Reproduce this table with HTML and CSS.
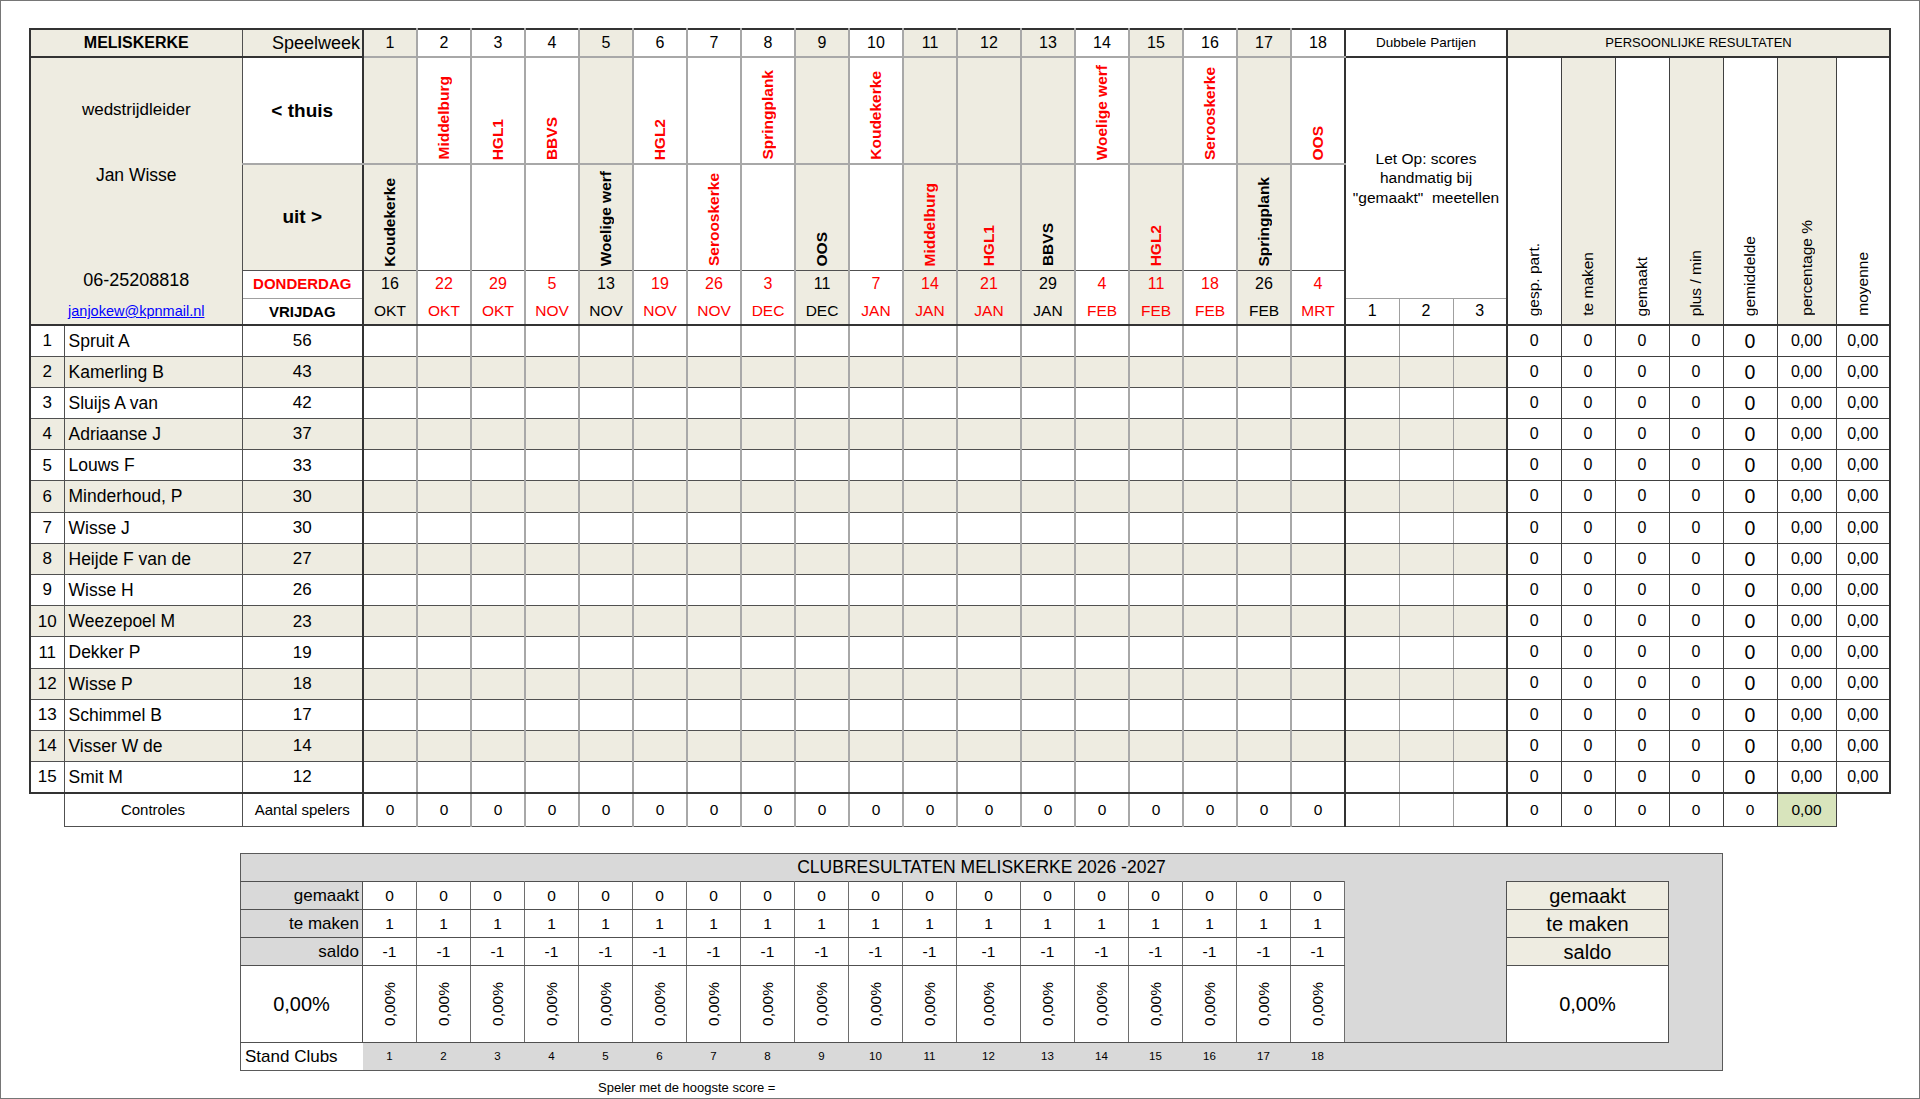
FILE: index.html
```html
<!DOCTYPE html>
<html lang="nl">
<head>
<meta charset="utf-8">
<title>Meliskerke</title>
<link rel="stylesheet" href="styles.css">
</head>
<body>
<table class="main">
<colgroup>
<col class="c-num"><col class="c-name"><col class="c-score">
<col class="c-wk"><col class="c-wk"><col class="c-wk"><col class="c-wk"><col class="c-wk"><col class="c-wk"><col class="c-wk"><col class="c-wk"><col class="c-wk"><col class="c-wk"><col class="c-wk"><col class="c-wk12"><col class="c-wk"><col class="c-wk"><col class="c-wk"><col class="c-wk"><col class="c-wk"><col class="c-wk">
<col class="c-wk"><col class="c-wk"><col class="c-wk">
<col class="c-wk"><col class="c-wk"><col class="c-wk"><col class="c-wk"><col class="c-wk"><col class="c-pct"><col class="c-wk">
</colgroup>
<tr class="rh">
<td colspan="2" class="b fl cname">MELISKERKE</td>
<td class="b e speel">Speelweek</td>
<td class="w b">1</td><td class="w">2</td><td class="w">3</td><td class="w">4</td><td class="w b">5</td><td class="w">6</td><td class="w">7</td><td class="w">8</td><td class="w b">9</td><td class="w">10</td><td class="w b">11</td><td class="w b">12</td><td class="w b">13</td><td class="w">14</td><td class="w b">15</td><td class="w">16</td><td class="w b">17</td><td class="w e">18</td>
<td colspan="3" class="e dub">Dubbele Partijen</td>
<td colspan="7" class="b pl pers">PERSOONLIJKE RESULTATEN</td>
</tr>
<tr class="rt">
<td colspan="2" rowspan="4" class="b fl info">
<div class="lead">wedstrijdleider</div>
<div class="lname">Jan Wisse</div>
<div class="tel">06-25208818</div>
<a class="mail" href="#">janjokew@kpnmail.nl</a>
</td>
<td class="e thuis">&lt; thuis</td>
<td class="w b"></td>
<td class="w rot"><span class="vt tm red">Middelburg</span></td>
<td class="w rot"><span class="vt tm red">HGL1</span></td>
<td class="w rot"><span class="vt tm red">BBVS</span></td>
<td class="w b"></td>
<td class="w rot"><span class="vt tm red">HGL2</span></td>
<td class="w"></td>
<td class="w rot"><span class="vt tm red">Springplank</span></td>
<td class="w b"></td>
<td class="w rot"><span class="vt tm red">Koudekerke</span></td>
<td class="w b"></td><td class="w b"></td><td class="w b"></td>
<td class="w rot"><span class="vt tm red">Woelige werf</span></td>
<td class="w b"></td>
<td class="w rot"><span class="vt tm red">Serooskerke</span></td>
<td class="w b"></td>
<td class="w e rot"><span class="vt tm red">OOS</span></td>
<td colspan="3" rowspan="3" class="e letop">Let Op: scores<br>handmatig bij<br>"gemaakt"&nbsp; meetellen</td>
<td rowspan="4" class="p ph"><span class="vt">gesp. part.</span></td>
<td rowspan="4" class="p ph b"><span class="vt">te maken</span></td>
<td rowspan="4" class="p ph"><span class="vt">gemaakt</span></td>
<td rowspan="4" class="p ph b"><span class="vt">plus / min</span></td>
<td rowspan="4" class="p ph"><span class="vt">gemiddelde</span></td>
<td rowspan="4" class="p ph b"><span class="vt">percentage %</span></td>
<td rowspan="4" class="p pl ph"><span class="vt">moyenne</span></td>
</tr>
<tr class="ru">
<td class="b e uit">uit &gt;</td>
<td class="w b rot"><span class="vt tm">Koudekerke</span></td>
<td class="w"></td><td class="w"></td><td class="w"></td>
<td class="w b rot"><span class="vt tm">Woelige werf</span></td>
<td class="w"></td>
<td class="w rot"><span class="vt tm red">Serooskerke</span></td>
<td class="w"></td>
<td class="w b rot"><span class="vt tm">OOS</span></td>
<td class="w"></td>
<td class="w b rot"><span class="vt tm red">Middelburg</span></td>
<td class="w b rot"><span class="vt tm red">HGL1</span></td>
<td class="w b rot"><span class="vt tm">BBVS</span></td>
<td class="w"></td>
<td class="w b rot"><span class="vt tm red">HGL2</span></td>
<td class="w"></td>
<td class="w b rot"><span class="vt tm">Springplank</span></td>
<td class="w e"></td>
</tr>
<tr class="rd">
<td class="e don">DONDERDAG</td>
<td class="w b">16</td><td class="w red">22</td><td class="w red">29</td><td class="w red">5</td><td class="w b">13</td><td class="w red">19</td><td class="w red">26</td><td class="w red">3</td><td class="w b">11</td><td class="w red">7</td><td class="w b red">14</td><td class="w b red">21</td><td class="w b">29</td><td class="w red">4</td><td class="w b red">11</td><td class="w red">18</td><td class="w b">26</td><td class="w e red">4</td>
</tr>
<tr class="rv">
<td class="e vrij">VRIJDAG</td>
<td class="w b">OKT</td><td class="w red">OKT</td><td class="w red">OKT</td><td class="w red">NOV</td><td class="w b">NOV</td><td class="w red">NOV</td><td class="w red">NOV</td><td class="w red">DEC</td><td class="w b">DEC</td><td class="w red">JAN</td><td class="w b red">JAN</td><td class="w b red">JAN</td><td class="w b">JAN</td><td class="w red">FEB</td><td class="w b red">FEB</td><td class="w red">FEB</td><td class="w b">FEB</td><td class="w e red">MRT</td>
<td class="d">1</td><td class="d">2</td><td class="d e">3</td>
</tr>

<tr class="rp"><td class="fl num">1</td><td class="nm">Spruit A</td><td class="e sc">56</td><td class="w"></td><td class="w"></td><td class="w"></td><td class="w"></td><td class="w"></td><td class="w"></td><td class="w"></td><td class="w"></td><td class="w"></td><td class="w"></td><td class="w"></td><td class="w"></td><td class="w"></td><td class="w"></td><td class="w"></td><td class="w"></td><td class="w"></td><td class="w e"></td><td class="d"></td><td class="d"></td><td class="d e"></td><td class="p">0</td><td class="p">0</td><td class="p">0</td><td class="p">0</td><td class="p g">0</td><td class="p">0,00</td><td class="p pl">0,00</td></tr>
<tr class="rp alt"><td class="fl num">2</td><td class="nm">Kamerling B</td><td class="e sc">43</td><td class="w"></td><td class="w"></td><td class="w"></td><td class="w"></td><td class="w"></td><td class="w"></td><td class="w"></td><td class="w"></td><td class="w"></td><td class="w"></td><td class="w"></td><td class="w"></td><td class="w"></td><td class="w"></td><td class="w"></td><td class="w"></td><td class="w"></td><td class="w e"></td><td class="d"></td><td class="d"></td><td class="d e"></td><td class="p">0</td><td class="p">0</td><td class="p">0</td><td class="p">0</td><td class="p g">0</td><td class="p">0,00</td><td class="p pl">0,00</td></tr>
<tr class="rp"><td class="fl num">3</td><td class="nm">Sluijs A van</td><td class="e sc">42</td><td class="w"></td><td class="w"></td><td class="w"></td><td class="w"></td><td class="w"></td><td class="w"></td><td class="w"></td><td class="w"></td><td class="w"></td><td class="w"></td><td class="w"></td><td class="w"></td><td class="w"></td><td class="w"></td><td class="w"></td><td class="w"></td><td class="w"></td><td class="w e"></td><td class="d"></td><td class="d"></td><td class="d e"></td><td class="p">0</td><td class="p">0</td><td class="p">0</td><td class="p">0</td><td class="p g">0</td><td class="p">0,00</td><td class="p pl">0,00</td></tr>
<tr class="rp alt"><td class="fl num">4</td><td class="nm">Adriaanse J</td><td class="e sc">37</td><td class="w"></td><td class="w"></td><td class="w"></td><td class="w"></td><td class="w"></td><td class="w"></td><td class="w"></td><td class="w"></td><td class="w"></td><td class="w"></td><td class="w"></td><td class="w"></td><td class="w"></td><td class="w"></td><td class="w"></td><td class="w"></td><td class="w"></td><td class="w e"></td><td class="d"></td><td class="d"></td><td class="d e"></td><td class="p">0</td><td class="p">0</td><td class="p">0</td><td class="p">0</td><td class="p g">0</td><td class="p">0,00</td><td class="p pl">0,00</td></tr>
<tr class="rp"><td class="fl num">5</td><td class="nm">Louws F</td><td class="e sc">33</td><td class="w"></td><td class="w"></td><td class="w"></td><td class="w"></td><td class="w"></td><td class="w"></td><td class="w"></td><td class="w"></td><td class="w"></td><td class="w"></td><td class="w"></td><td class="w"></td><td class="w"></td><td class="w"></td><td class="w"></td><td class="w"></td><td class="w"></td><td class="w e"></td><td class="d"></td><td class="d"></td><td class="d e"></td><td class="p">0</td><td class="p">0</td><td class="p">0</td><td class="p">0</td><td class="p g">0</td><td class="p">0,00</td><td class="p pl">0,00</td></tr>
<tr class="rp alt"><td class="fl num">6</td><td class="nm">Minderhoud, P</td><td class="e sc">30</td><td class="w"></td><td class="w"></td><td class="w"></td><td class="w"></td><td class="w"></td><td class="w"></td><td class="w"></td><td class="w"></td><td class="w"></td><td class="w"></td><td class="w"></td><td class="w"></td><td class="w"></td><td class="w"></td><td class="w"></td><td class="w"></td><td class="w"></td><td class="w e"></td><td class="d"></td><td class="d"></td><td class="d e"></td><td class="p">0</td><td class="p">0</td><td class="p">0</td><td class="p">0</td><td class="p g">0</td><td class="p">0,00</td><td class="p pl">0,00</td></tr>
<tr class="rp"><td class="fl num">7</td><td class="nm">Wisse J</td><td class="e sc">30</td><td class="w"></td><td class="w"></td><td class="w"></td><td class="w"></td><td class="w"></td><td class="w"></td><td class="w"></td><td class="w"></td><td class="w"></td><td class="w"></td><td class="w"></td><td class="w"></td><td class="w"></td><td class="w"></td><td class="w"></td><td class="w"></td><td class="w"></td><td class="w e"></td><td class="d"></td><td class="d"></td><td class="d e"></td><td class="p">0</td><td class="p">0</td><td class="p">0</td><td class="p">0</td><td class="p g">0</td><td class="p">0,00</td><td class="p pl">0,00</td></tr>
<tr class="rp alt"><td class="fl num">8</td><td class="nm">Heijde F van de</td><td class="e sc">27</td><td class="w"></td><td class="w"></td><td class="w"></td><td class="w"></td><td class="w"></td><td class="w"></td><td class="w"></td><td class="w"></td><td class="w"></td><td class="w"></td><td class="w"></td><td class="w"></td><td class="w"></td><td class="w"></td><td class="w"></td><td class="w"></td><td class="w"></td><td class="w e"></td><td class="d"></td><td class="d"></td><td class="d e"></td><td class="p">0</td><td class="p">0</td><td class="p">0</td><td class="p">0</td><td class="p g">0</td><td class="p">0,00</td><td class="p pl">0,00</td></tr>
<tr class="rp"><td class="fl num">9</td><td class="nm">Wisse H</td><td class="e sc">26</td><td class="w"></td><td class="w"></td><td class="w"></td><td class="w"></td><td class="w"></td><td class="w"></td><td class="w"></td><td class="w"></td><td class="w"></td><td class="w"></td><td class="w"></td><td class="w"></td><td class="w"></td><td class="w"></td><td class="w"></td><td class="w"></td><td class="w"></td><td class="w e"></td><td class="d"></td><td class="d"></td><td class="d e"></td><td class="p">0</td><td class="p">0</td><td class="p">0</td><td class="p">0</td><td class="p g">0</td><td class="p">0,00</td><td class="p pl">0,00</td></tr>
<tr class="rp alt"><td class="fl num">10</td><td class="nm">Weezepoel M</td><td class="e sc">23</td><td class="w"></td><td class="w"></td><td class="w"></td><td class="w"></td><td class="w"></td><td class="w"></td><td class="w"></td><td class="w"></td><td class="w"></td><td class="w"></td><td class="w"></td><td class="w"></td><td class="w"></td><td class="w"></td><td class="w"></td><td class="w"></td><td class="w"></td><td class="w e"></td><td class="d"></td><td class="d"></td><td class="d e"></td><td class="p">0</td><td class="p">0</td><td class="p">0</td><td class="p">0</td><td class="p g">0</td><td class="p">0,00</td><td class="p pl">0,00</td></tr>
<tr class="rp"><td class="fl num">11</td><td class="nm">Dekker P</td><td class="e sc">19</td><td class="w"></td><td class="w"></td><td class="w"></td><td class="w"></td><td class="w"></td><td class="w"></td><td class="w"></td><td class="w"></td><td class="w"></td><td class="w"></td><td class="w"></td><td class="w"></td><td class="w"></td><td class="w"></td><td class="w"></td><td class="w"></td><td class="w"></td><td class="w e"></td><td class="d"></td><td class="d"></td><td class="d e"></td><td class="p">0</td><td class="p">0</td><td class="p">0</td><td class="p">0</td><td class="p g">0</td><td class="p">0,00</td><td class="p pl">0,00</td></tr>
<tr class="rp alt"><td class="fl num">12</td><td class="nm">Wisse P</td><td class="e sc">18</td><td class="w"></td><td class="w"></td><td class="w"></td><td class="w"></td><td class="w"></td><td class="w"></td><td class="w"></td><td class="w"></td><td class="w"></td><td class="w"></td><td class="w"></td><td class="w"></td><td class="w"></td><td class="w"></td><td class="w"></td><td class="w"></td><td class="w"></td><td class="w e"></td><td class="d"></td><td class="d"></td><td class="d e"></td><td class="p">0</td><td class="p">0</td><td class="p">0</td><td class="p">0</td><td class="p g">0</td><td class="p">0,00</td><td class="p pl">0,00</td></tr>
<tr class="rp"><td class="fl num">13</td><td class="nm">Schimmel B</td><td class="e sc">17</td><td class="w"></td><td class="w"></td><td class="w"></td><td class="w"></td><td class="w"></td><td class="w"></td><td class="w"></td><td class="w"></td><td class="w"></td><td class="w"></td><td class="w"></td><td class="w"></td><td class="w"></td><td class="w"></td><td class="w"></td><td class="w"></td><td class="w"></td><td class="w e"></td><td class="d"></td><td class="d"></td><td class="d e"></td><td class="p">0</td><td class="p">0</td><td class="p">0</td><td class="p">0</td><td class="p g">0</td><td class="p">0,00</td><td class="p pl">0,00</td></tr>
<tr class="rp alt"><td class="fl num">14</td><td class="nm">Visser W de</td><td class="e sc">14</td><td class="w"></td><td class="w"></td><td class="w"></td><td class="w"></td><td class="w"></td><td class="w"></td><td class="w"></td><td class="w"></td><td class="w"></td><td class="w"></td><td class="w"></td><td class="w"></td><td class="w"></td><td class="w"></td><td class="w"></td><td class="w"></td><td class="w"></td><td class="w e"></td><td class="d"></td><td class="d"></td><td class="d e"></td><td class="p">0</td><td class="p">0</td><td class="p">0</td><td class="p">0</td><td class="p g">0</td><td class="p">0,00</td><td class="p pl">0,00</td></tr>
<tr class="rp rlast"><td class="fl num">15</td><td class="nm">Smit M</td><td class="e sc">12</td><td class="w"></td><td class="w"></td><td class="w"></td><td class="w"></td><td class="w"></td><td class="w"></td><td class="w"></td><td class="w"></td><td class="w"></td><td class="w"></td><td class="w"></td><td class="w"></td><td class="w"></td><td class="w"></td><td class="w"></td><td class="w"></td><td class="w"></td><td class="w e"></td><td class="d"></td><td class="d"></td><td class="d e"></td><td class="p">0</td><td class="p">0</td><td class="p">0</td><td class="p">0</td><td class="p g">0</td><td class="p">0,00</td><td class="p pl">0,00</td></tr>
<tr class="rc">
<td class="void"></td><td class="ctl">Controles</td><td class="ctl e">Aantal spelers</td>
<td class="w">0</td><td class="w">0</td><td class="w">0</td><td class="w">0</td><td class="w">0</td><td class="w">0</td><td class="w">0</td><td class="w">0</td><td class="w">0</td><td class="w">0</td><td class="w">0</td><td class="w">0</td><td class="w">0</td><td class="w">0</td><td class="w">0</td><td class="w">0</td><td class="w">0</td><td class="w e">0</td>
<td class="d"></td><td class="d"></td><td class="d e"></td>
<td class="p">0</td><td class="p">0</td><td class="p">0</td><td class="p">0</td><td class="p">0</td><td class="p grn">0,00</td><td class="void2"></td>
</tr>
</table>

<table class="club">
<colgroup>
<col class="c-lab">
<col class="c-wk"><col class="c-wk"><col class="c-wk"><col class="c-wk"><col class="c-wk"><col class="c-wk"><col class="c-wk"><col class="c-wk"><col class="c-wk"><col class="c-wk"><col class="c-wk"><col class="c-wk12"><col class="c-wk"><col class="c-wk"><col class="c-wk"><col class="c-wk"><col class="c-wk"><col class="c-wk">
<col class="c-gap"><col class="c-sum"><col class="c-end">
</colgroup>
<tr class="ct"><td colspan="22" class="nb title">CLUBRESULTATEN MELISKERKE 2026 -2027</td></tr>
<tr class="cr">
<td class="lab top">gemaakt</td>
<td class="cv top">0</td><td class="cv top">0</td><td class="cv top">0</td><td class="cv top">0</td><td class="cv top">0</td><td class="cv top">0</td><td class="cv top">0</td><td class="cv top">0</td><td class="cv top">0</td><td class="cv top">0</td><td class="cv top">0</td><td class="cv top">0</td><td class="cv top">0</td><td class="cv top">0</td><td class="cv top">0</td><td class="cv top">0</td><td class="cv top">0</td><td class="cv top">0</td>
<td rowspan="4" class="gap"></td>
<td class="sum top">gemaakt</td>
<td rowspan="5" class="nb"></td>
</tr>
<tr class="cr">
<td class="lab">te maken</td>
<td class="cv">1</td><td class="cv">1</td><td class="cv">1</td><td class="cv">1</td><td class="cv">1</td><td class="cv">1</td><td class="cv">1</td><td class="cv">1</td><td class="cv">1</td><td class="cv">1</td><td class="cv">1</td><td class="cv">1</td><td class="cv">1</td><td class="cv">1</td><td class="cv">1</td><td class="cv">1</td><td class="cv">1</td><td class="cv">1</td>
<td class="sum">te maken</td>
</tr>
<tr class="cr">
<td class="lab">saldo</td>
<td class="cv">-1</td><td class="cv">-1</td><td class="cv">-1</td><td class="cv">-1</td><td class="cv">-1</td><td class="cv">-1</td><td class="cv">-1</td><td class="cv">-1</td><td class="cv">-1</td><td class="cv">-1</td><td class="cv">-1</td><td class="cv">-1</td><td class="cv">-1</td><td class="cv">-1</td><td class="cv">-1</td><td class="cv">-1</td><td class="cv">-1</td><td class="cv">-1</td>
<td class="sum">saldo</td>
</tr>
<tr class="cp">
<td class="big">0,00%</td>
<td class="cv pv"><span class="vt">0,00%</span></td><td class="cv pv"><span class="vt">0,00%</span></td><td class="cv pv"><span class="vt">0,00%</span></td><td class="cv pv"><span class="vt">0,00%</span></td><td class="cv pv"><span class="vt">0,00%</span></td><td class="cv pv"><span class="vt">0,00%</span></td><td class="cv pv"><span class="vt">0,00%</span></td><td class="cv pv"><span class="vt">0,00%</span></td><td class="cv pv"><span class="vt">0,00%</span></td><td class="cv pv"><span class="vt">0,00%</span></td><td class="cv pv"><span class="vt">0,00%</span></td><td class="cv pv"><span class="vt">0,00%</span></td><td class="cv pv"><span class="vt">0,00%</span></td><td class="cv pv"><span class="vt">0,00%</span></td><td class="cv pv"><span class="vt">0,00%</span></td><td class="cv pv"><span class="vt">0,00%</span></td><td class="cv pv"><span class="vt">0,00%</span></td><td class="cv pv"><span class="vt">0,00%</span></td>
<td class="big sum-big">0,00%</td>
</tr>
<tr class="cs">
<td class="nb stand">Stand Clubs</td>
<td class="nb sn">1</td><td class="nb sn">2</td><td class="nb sn">3</td><td class="nb sn">4</td><td class="nb sn">5</td><td class="nb sn">6</td><td class="nb sn">7</td><td class="nb sn">8</td><td class="nb sn">9</td><td class="nb sn">10</td><td class="nb sn">11</td><td class="nb sn">12</td><td class="nb sn">13</td><td class="nb sn">14</td><td class="nb sn">15</td><td class="nb sn">16</td><td class="nb sn">17</td><td class="nb sn">18</td>
<td colspan="2" class="nb"></td>
</tr>
</table>

<div class="note">Speler met de hoogste score =</div>
</body>
</html>
```

FILE: styles.css
```css
* { box-sizing: border-box; }
html { margin: 0; background: #fff; }
body {
  margin: 0;
  width: 1920px;
  height: 1099px;
  border: 1px solid #767676;
  padding: 27px 0 0 28px;
  font-family: "Liberation Sans", Arial, Helvetica, sans-serif;
  font-size: 15px;
  color: #000;
  background: #fff;
  overflow: hidden;
}
table { border-collapse: collapse; table-layout: fixed; border-spacing: 0; }
td {
  padding: 0;
  border: 0 none;
  border-right: 1px solid #505050;
  border-bottom: 1px solid #505050;
  text-align: center;
  vertical-align: middle;
  white-space: nowrap;
  overflow: hidden;
  line-height: 1.15;
}

/* columns */
.main { width: 1860px; }
.c-num { width: 34px; }
.c-name { width: 178px; }
.c-score { width: 121px; }
.c-wk { width: 54px; }
.c-wk12 { width: 64px; }
.c-pct { width: 59px; }

/* colours */
.b { background: #eeece1; }
.red { color: #ff0000; }
.grn { background: #d8e4bc; }

/* grid lines */
.w { border-right: 2px solid #a8a8a8; }
.d { border-right: 1px solid #a0a0a0; }
.p { border-right: 1px solid #404040; border-bottom: 1px solid #404040; }
.e { border-right: 2px solid #333; }
.pl { border-right: 2px solid #333; }
.fl { border-left: 2px solid #333; }

/* header row */
.rh { font-size: 16px; }
.rh td { height: 28px; border-top: 2px solid #333; border-bottom: 2px solid #333; }
.rh .w { border-bottom: 2px solid #a8a8a8; }
.cname { font-weight: bold; font-size: 16px; }
.speel { text-align: right; padding-right: 2px; font-size: 18px; }
.dub { font-size: 13.5px; }
.pers { font-size: 13px; }

/* thuis / uit rows */
.rt td { height: 107px; }
.rt .w { border-bottom: 2px solid #a8a8a8; }
.ru td { height: 106px; }
.thuis { font-weight: bold; font-size: 19px; border-bottom: 2px solid #a8a8a8; }
.uit { font-weight: bold; font-size: 19px; }

.info { vertical-align: top; padding-top: 42px; border-bottom: 2px solid #333; }
.lead { font-size: 17px; line-height: 20px; }
.lname { font-size: 17.5px; line-height: 20px; margin-top: 45px; }
.tel { font-size: 18px; line-height: 20px; margin-top: 85px; }
.mail { display: block; font-size: 14.5px; line-height: 18px; margin-top: 12px; color: #0000ff; text-decoration: underline; }

.rot { vertical-align: bottom; line-height: 0; padding-bottom: 3px; }
.vt {
  display: inline-block;
  writing-mode: vertical-rl;
  transform: rotate(180deg);
  vertical-align: bottom;
  line-height: 18px;
}
.tm { font-weight: bold; font-size: 15.5px; }

.letop { font-size: 15.5px; line-height: 19.5px; border-bottom: 1px solid #a0a0a0; }
.ph { vertical-align: bottom; line-height: 0; padding-bottom: 8px; border-bottom: 2px solid #333; font-size: 15.5px; }

/* date rows */
.rd { font-size: 16px; }
.rd td { height: 28px; }
.rd .w { border-bottom: 0 none; }
.don { font-weight: bold; color: #ff0000; font-size: 15px; border-bottom: 1px solid #a0a0a0; }
.rv { font-size: 15.5px; }
.rv td { height: 27px; border-bottom: 2px solid #333; }
.vrij { font-weight: bold; font-size: 15px; }
.rv .d { font-size: 16px; }

/* player rows */
.rp { font-size: 16px; }
.rp td { height: 31.2px; }
.alt td { background: #eeece1; }
.alt td.p { background: #fff; }
.rlast td { border-bottom: 2px solid #333; }
.num { font-size: 17px; }
.nm { text-align: left; padding-left: 4px; font-size: 17.5px; }
.sc { font-size: 17px; }
.g { font-size: 19.5px; }

/* controles row */
.rc { font-size: 15.5px; }
.rc td { height: 33.5px; }
.ctl { font-size: 15px; }
.void { border-right: 1px solid #505050; border-bottom: 0 none; }
.void2 { border-right: 0 none; border-bottom: 0 none; }

/* club results */
.club {
  width: 1482px;
  margin: 26px 0 0 211px;
  border: 1px solid #5a5a5a;
  background: #d9d9d9;
}
.c-lab { width: 122px; }
.c-gap { width: 162px; }
.c-sum { width: 162px; }
.c-end { width: 54px; }
.nb { border-right: 0 none; border-bottom: 0 none; }
.ct td { height: 28.4px; }
.title { font-size: 17.5px; }
.cr td { height: 28px; }
.top { border-top: 1px solid #505050; }
.lab { text-align: right; padding-right: 3px; font-size: 17px; }
.cv { background: #fff; border-right: 1px solid #6e6e6e; font-size: 15.5px; }
.gap { background: #d9d9d9; }
.sum { background: #eeece1; font-size: 20px; line-height: 22px; }
.cp td { height: 77px; }
.big { background: #fff; font-size: 20px; }
.pv { line-height: 0; }
.pv .vt { vertical-align: middle; font-size: 15.5px; }
.cs td { height: 27.7px; }
.stand { background: #fff; text-align: left; padding-left: 4px; font-size: 17px; }
.sn { font-size: 11.5px; }

.note { margin: 9px 0 0 569px; font-size: 13px; line-height: 15px; }
```
